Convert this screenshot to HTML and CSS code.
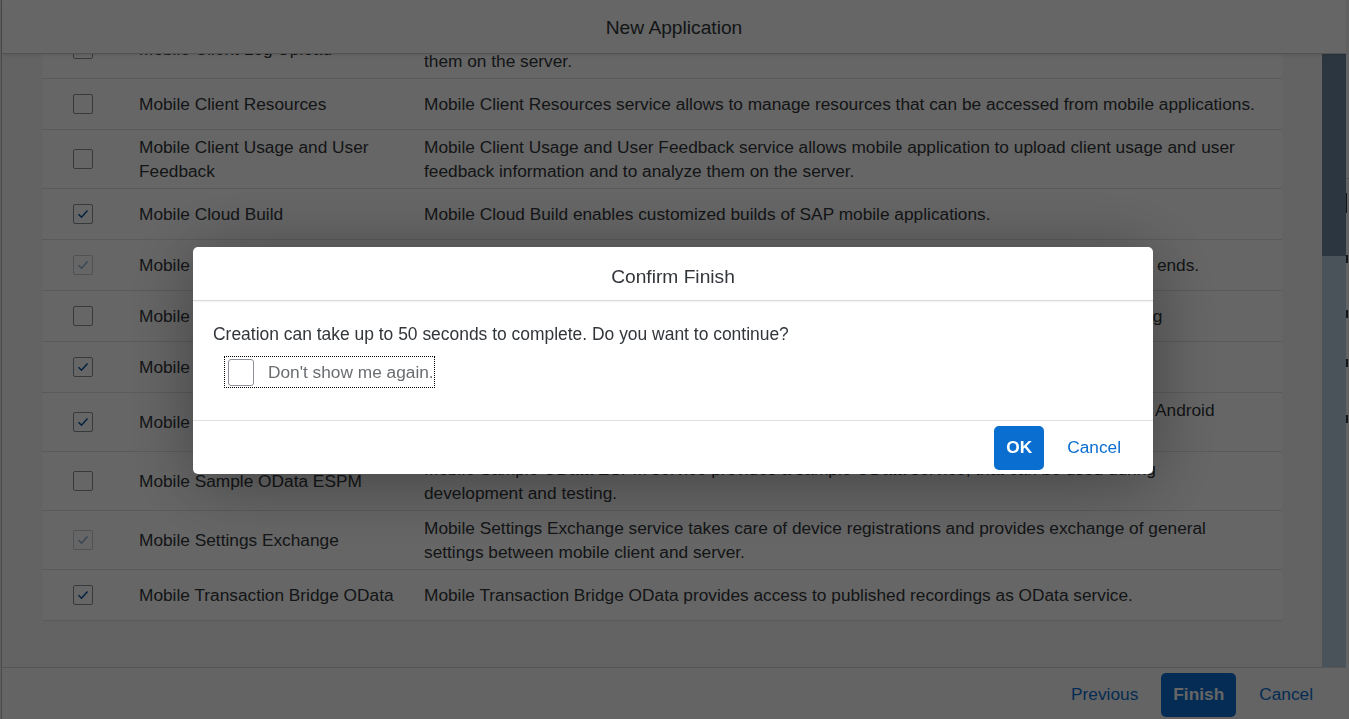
FILE: index.html
```html
<!DOCTYPE html>
<html lang="en">
<head>
<meta charset="utf-8">
<title>New Application</title>
<link rel="stylesheet" href="styles.css">
</head>
<body>
<div class="screen">
  <div class="edge"></div>
  <div class="app">
    <header class="app-head"><h1 class="app-title">New Application</h1></header>
    <div class="app-body">
      <div class="list-wrap">
        <div class="list">
          <div class="row">
            <div class="c-check"><span class="cb"></span></div>
            <div class="c-name">Mobile Client Log Upload</div>
            <div class="c-desc">Mobile Client Log Upload service allows mobile application to upload client logs and traces and to analyze them on the server.</div>
          </div>
          <div class="row">
            <div class="c-check"><span class="cb"></span></div>
            <div class="c-name">Mobile Client Resources</div>
            <div class="c-desc">Mobile Client Resources service allows to manage resources that can be accessed from mobile applications.</div>
          </div>
          <div class="row">
            <div class="c-check"><span class="cb"></span></div>
            <div class="c-name">Mobile Client Usage and User Feedback</div>
            <div class="c-desc">Mobile Client Usage and User Feedback service allows mobile application to upload client usage and user feedback information and to analyze them on the server.</div>
          </div>
          <div class="row">
            <div class="c-check"><span class="cb on"><svg viewBox="0 0 20 20"><path d="M5.5 10.2l3 3 6-6.6"/></svg></span></div>
            <div class="c-name">Mobile Cloud Build</div>
            <div class="c-desc">Mobile Cloud Build enables customized builds of SAP mobile applications.</div>
          </div>
          <div class="row">
            <div class="c-check"><span class="cb on off"><svg viewBox="0 0 20 20"><path d="M5.5 10.2l3 3 6-6.6"/></svg></span></div>
            <div class="c-name">Mobile Connectivity</div>
            <div class="c-desc">Mobile Connectivity service allows mobile apps to access data from on-premise and cloud back ends.</div>
          </div>
          <div class="row">
            <div class="c-check"><span class="cb"></span></div>
            <div class="c-name">Mobile Network Trace</div>
            <div class="c-desc">Mobile Network Trace service allows to capture and review the network traffic for troubleshooting</div>
          </div>
          <div class="row">
            <div class="c-check"><span class="cb on"><svg viewBox="0 0 20 20"><path d="M5.5 10.2l3 3 6-6.6"/></svg></span></div>
            <div class="c-name">Mobile Offline Access</div>
            <div class="c-desc">Mobile Offline Access service provides offline OData capabilities for mobile applications.</div>
          </div>
          <div class="row">
            <div class="c-check"><span class="cb on"><svg viewBox="0 0 20 20"><path d="M5.5 10.2l3 3 6-6.6"/></svg></span></div>
            <div class="c-name">Mobile Push Notification</div>
            <div class="c-desc">Mobile Push Notification service allows to send push notifications to mobile devices on iOS and Android platforms.</div>
          </div>
          <div class="row">
            <div class="c-check"><span class="cb"></span></div>
            <div class="c-name">Mobile Sample OData ESPM</div>
            <div class="c-desc">Mobile Sample OData ESPM service provides a sample OData service, that can be used during development&nbsp;and testing.</div>
          </div>
          <div class="row">
            <div class="c-check"><span class="cb on off"><svg viewBox="0 0 20 20"><path d="M5.5 10.2l3 3 6-6.6"/></svg></span></div>
            <div class="c-name">Mobile Settings Exchange</div>
            <div class="c-desc">Mobile Settings Exchange service takes care of device registrations and provides exchange of general settings between mobile client and server.</div>
          </div>
          <div class="row">
            <div class="c-check"><span class="cb on"><svg viewBox="0 0 20 20"><path d="M5.5 10.2l3 3 6-6.6"/></svg></span></div>
            <div class="c-name">Mobile Transaction Bridge OData</div>
            <div class="c-desc">Mobile Transaction Bridge OData provides access to published recordings as OData service.</div>
          </div>
        </div>
      </div>
      <div class="scrollbar"><div class="thumb"></div></div>
    </div>
    <footer class="app-foot">
      <button class="btn btn-link">Previous</button>
      <button class="btn btn-primary">Finish</button>
      <button class="btn btn-link">Cancel</button>
    </footer>
  </div>
  <div class="behind">
    <div class="bh-line bh-a"></div>
    <div class="bh-mark bh-b"></div>
    <div class="bh-mark bh-c"></div>
    <div class="bh-mark bh-d"></div>
    <div class="bh-mark bh-e"></div>
    <div class="bh-mark bh-f"></div>
  </div>
</div>

<div class="overlay">
  <div class="dialog" role="dialog">
    <div class="d-head">Confirm Finish</div>
    <div class="d-body">
      <p class="d-text">Creation can take up to 50 seconds to complete. Do you want to continue?</p>
      <label class="d-check"><span class="d-box"></span><span class="d-label">Don't show me again.</span></label>
    </div>
    <div class="d-foot">
      <button class="btn btn-primary btn-ok">OK</button>
      <button class="btn btn-link">Cancel</button>
    </div>
  </div>
</div>
</body>
</html>
```

FILE: styles.css
```css
html, body {
  margin: 0;
  padding: 0;
}
body {
  width: 1349px;
  height: 719px;
  overflow: hidden;
  background: #f2f2f2;
  font-family: "Liberation Sans", Arial, sans-serif;
  font-size: 17.3px;
  color: #32363a;
}

.screen {
  display: flex;
  height: 719px;
  overflow: hidden;
}
.edge {
  width: 1px;
  flex: none;
  background: #ededed;
}

.app {
  flex: none;
  width: 1345px;
  height: 721px;
  box-sizing: border-box;
  border-left: 1px solid #b8b8b8;
  background: #f7f7f7;
  display: flex;
  flex-direction: column;
}
.app-head {
  flex: none;
  height: 54px;
  box-sizing: border-box;
  padding-top: 2px;
  border-bottom: 1px solid #cfcfcf;
  background: #ffffff;
  display: flex;
  align-items: center;
  justify-content: center;
  position: relative;
  z-index: 1;
  box-shadow: 0 1px 3px rgba(0,0,0,0.12);
}
.app-title {
  margin: 0;
  font-size: 19.2px;
  font-weight: normal;
  color: #32363a;
}

.app-body {
  flex: 1;
  min-height: 0;
  display: flex;
}
.list-wrap {
  flex: 1;
  min-width: 0;
  overflow: hidden;
  padding: 0 40px;
}
.list {
  margin-top: -34px;
  background: #ffffff;
}
.row {
  display: grid;
  grid-template-columns: 82px 285px 1fr;
  align-items: center;
  min-height: 51px;
  box-sizing: border-box;
  padding: 5px 0;
  border-bottom: 1px solid #e2e2e2;
  line-height: 24px;
}
.c-check {
  display: flex;
  justify-content: center;
}
.c-name {
  padding: 0 15px;
}
.c-desc {
  padding: 0 18px 0 15px;
}
.cb {
  width: 20px;
  height: 20px;
  box-sizing: border-box;
  border: 1px solid #89919a;
  border-radius: 2px;
  background: #ffffff;
  display: flex;
  align-items: center;
  justify-content: center;
}
.cb svg {
  width: 20px;
  height: 20px;
  flex: none;
  fill: none;
  stroke: #0854a0;
  stroke-width: 1.5;
}
.cb.off {
  opacity: 0.45;
}

.scrollbar {
  flex: none;
  width: 24px;
  background: #bacde2;
}
.thumb {
  height: 202px;
  background: #6c88a0;
}

.app-foot {
  flex: none;
  height: 54px;
  box-sizing: border-box;
  border-top: 1px solid #d5d5d5;
  background: #fafafa;
  display: flex;
  align-items: center;
  justify-content: flex-end;
  gap: 11px;
  padding-right: 21px;
}

.btn {
  height: 44px;
  padding: 0 12px;
  border: none;
  border-radius: 5px;
  font-family: inherit;
  font-size: 17.3px;
  background: transparent;
  color: #0a6ed1;
  cursor: pointer;
}
.btn-primary {
  background: #0a6ed1;
  color: #ffffff;
  font-weight: bold;
}

.behind {
  flex: none;
  width: 3px;
  background: #f7f7f7;
  display: flex;
  flex-direction: column;
}
.bh-line {
  height: 1px;
  background: #d0d0d0;
}
.bh-a { margin-top: 178px; }
.bh-mark {
  width: 2px;
  height: 8px;
  background: #32363a;
}
.bh-b { margin-top: 14px; height: 20px; width: 1px; }
.bh-c { margin-top: 42px; }
.bh-d { margin-top: 47px; }
.bh-e { margin-top: 41px; }
.bh-f { margin-top: 48px; }

.overlay {
  position: fixed;
  inset: 0;
  z-index: 10;
  background: rgba(0,0,0,0.6);
  display: flex;
  align-items: center;
  justify-content: center;
  padding: 2px 3px 0 0;
}
.dialog {
  width: 960px;
  background: #ffffff;
  border-radius: 5px;
  overflow: hidden;
  box-shadow: 0 8px 70px rgba(0,0,0,0.35);
}
.d-head {
  height: 54px;
  box-sizing: border-box;
  padding-top: 6px;
  border-bottom: 1px solid #d9d9d9;
  box-shadow: 0 1px 2px rgba(0,0,0,0.06);
  display: flex;
  align-items: center;
  justify-content: center;
  font-size: 19.2px;
  color: #32363a;
}
.d-body {
  padding: 21px 20px 32px;
}
.d-text {
  margin: 0 0 10px;
  line-height: 24px;
  font-size: 17.45px;
}
.d-check {
  display: flex;
  width: fit-content;
  align-items: center;
  gap: 14px;
  height: 32px;
  box-sizing: border-box;
  margin-left: 11px;
  padding-left: 3px;
  border: 1px dotted #000000;
}
.d-box {
  width: 26px;
  height: 27px;
  box-sizing: border-box;
  border: 1px solid #8c9199;
  border-radius: 3px;
  background: #ffffff;
}
.d-label {
  color: #6a6d70;
  line-height: 24px;
}
.d-foot {
  height: 54px;
  box-sizing: border-box;
  border-top: 1px solid #e0e0e0;
  display: flex;
  align-items: center;
  justify-content: flex-end;
  gap: 11px;
  padding-right: 20px;
}
.btn-ok {
  min-width: 50px;
}
```
